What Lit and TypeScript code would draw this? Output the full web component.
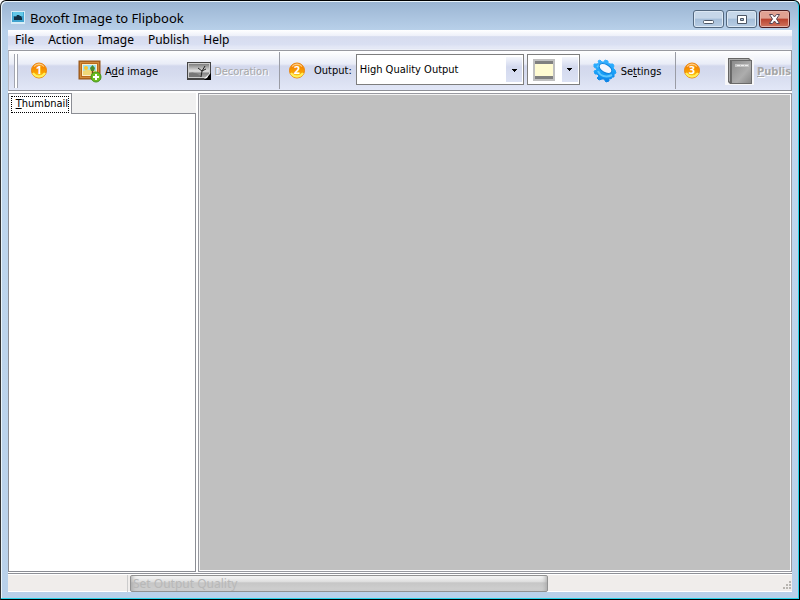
import { LitElement, html, css, svg } from "lit";
import { customElement, property } from "lit/decorators.js";

@customElement("step-badge")
class StepBadge extends LitElement {
  @property({ type: Number }) step = 1;

  static styles = css`
    :host { display: block; flex: none; width: 18px; height: 18px; }
    svg { display: block; }
    text { font: bold 11px "Open Sans", sans-serif; fill: #fff; text-anchor: middle; }
  `;

  render() {
    return html`<svg width="18" height="18" viewBox="0 0 18 18" aria-label="Step ${this.step}">
      <defs>
        <linearGradient id="g" x1="0" y1="0" x2="0" y2="1">
          <stop offset="0" stop-color="#ffb84a" /><stop offset=".3" stop-color="#f58a00" />
          <stop offset=".65" stop-color="#fba400" /><stop offset="1" stop-color="#fff04a" />
        </linearGradient>
      </defs>
      <circle cx="9" cy="8.500" r="7.500" fill="url(#g)" stroke="#ea8410" />
      <path d="M4 4.500A6.500 6.500 0 0 1 14 4.500" fill="none" stroke="#ffd090" />
      <path d="M3 11A7 7 0 0 0 15 11" fill="none" stroke="#fff25a" stroke-width="2" />
      <text x="9" y="12">${this.step}</text>
    </svg>`;
  }
}

const pictureIcon = svg`<svg width="24" height="24" viewBox="0 0 24 24" aria-hidden="true">
  <rect x="1" y="2" width="21" height="18" fill="#b96a1c" stroke="#94561c"/>
  <rect x="2.500" y="3.500" width="18" height="15" fill="none" stroke="#d08a3c"/>
  <rect x="4.500" y="5.500" width="14" height="11" fill="#9be0f6" stroke="#fbeec8"/>
  <path d="M5 12Q10 9.500 18 12V16H5Z" fill="#f0d878"/>
  <circle cx="8" cy="9" r="2" fill="#ffc62b"/>
  <path d="M14.500 10V15" stroke="#704818" stroke-width="1.500"/>
  <path d="M14.500 6L17 9L16 12H13L12 9Z" fill="#4c8a28"/>
  <circle cx="18" cy="18" r="5" fill="#6cbc20" stroke="#44941a"/>
  <path d="M18 15V21M15 18H21" stroke="#fff" stroke-width="2"/>
</svg>`;

const decorationIcon = svg`<svg width="25" height="20" viewBox="0 0 25 20" aria-hidden="true">
  <defs><linearGradient id="d" x1="0" y1="0" x2="0" y2="1">
    <stop offset="0" stop-color="#777"/><stop offset=".55" stop-color="#e2e2e2"/>
    <stop offset=".7" stop-color="#888"/><stop offset="1" stop-color="#aaa"/></linearGradient></defs>
  <rect x="0" y="1" width="24" height="18" fill="#444"/>
  <rect x="1.500" y="2.500" width="21" height="14" fill="url(#d)" stroke="#ccc"/>
  <path d="M2 12Q8 10 14 15L14 16H2Z" fill="#777"/>
  <path d="M14 16L15 10L11 7M15 10L18 5M15 10L19 8" fill="none" stroke="#222"/>
  <path d="M24 12V19H17Z" fill="#000"/><path d="M17 18L23 12L20 17Z" fill="#fff"/>
</svg>`;

const gearIcon = svg`<svg width="24" height="24" viewBox="0 0 24 24" aria-hidden="true">
  <defs><linearGradient id="b" x1="0" y1="0" x2="0" y2="1">
    <stop offset="0" stop-color="#38b0ff"/><stop offset=".5" stop-color="#1ca4fa"/>
    <stop offset="1" stop-color="#0a80e4"/></linearGradient></defs>
  <path fill="url(#b)" stroke="url(#b)" stroke-linejoin="round" d="M5 2L7 1L9 3L11 3L12 1L15 2L15 4L17 5L20 5L21 7L20 9L22 11L23 14L21 15L21 18L19 18L18 20L16 19L16 22L13 23L11 20L9 20L6 21L4 19L6 17L4 15L2 15L1 12L4 11L3 9L1 8L1 5L4 5L6 4Z"/>
  <path d="M4 8L7 6L11 5M5 12C7 17 13 19 19 16" fill="none" stroke="#5cc6ff" stroke-width="2"/>
  <ellipse cx="12.500" cy="9.500" rx="7" ry="4" transform="rotate(30 12.500 9.500)" fill="#f4f6fd" stroke="#0e82dc"/>
</svg>`;

const bookIcon = svg`<svg width="29" height="28" viewBox="0 0 29 28" aria-hidden="true">
  <defs><linearGradient id="k" x1="0" y1="0" x2="1" y2="1">
    <stop offset="0" stop-color="#8a8a8a"/><stop offset=".6" stop-color="#adadad"/>
    <stop offset="1" stop-color="#858585"/></linearGradient></defs>
  <rect width="29" height="28" fill="#f7f7f9"/>
  <path d="M3 1H24L27 4V27H5L3 25Z" fill="#666"/>
  <path d="M4 2H23L25 3H5V25L4 24Z" fill="#aaa"/>
  <rect x="6.500" y="3.500" width="20" height="23" fill="url(#k)" stroke="#6a6a6a"/>
  <rect x="10" y="7" width="14" height="3" fill="#c4c4c4"/>
  <path d="M12 8.500H23" stroke="#ececec" stroke-dasharray="3 1"/>
</svg>`;

@customElement("app-root")
class AppRoot extends LitElement {
  static styles = css`
    * { box-sizing: border-box; }
    :host {
      display: flex; flex-direction: column; height: 100vh; box-sizing: border-box;
      overflow: hidden; padding: 0 7px 7px 6px; color: #000;
      font: 11px/16px "DejaVu Sans Condensed", "DejaVu Sans", sans-serif;
      border: 1px solid #000; border-left-color: #333; border-radius: 6px 6px 0 0;
      box-shadow: inset 0 -1px #28d2e8, inset -1px 0 #28d2e8, inset 1px 1px #e9f4fb;
      background: linear-gradient(#9ab4d2, #b9d1ea 30px, #bfd7ee 90px, #b9d1ea);
    }
    button { font: inherit; color: inherit; background: none; border: 0; padding: 0; margin: 0; }
    svg { display: block; flex: none; }
    .title { display: flex; flex: none; height: 29px; align-items: center; padding: 5px 0 0 4px; }
    h1 { margin: 0; padding-left: 5px; flex: 1; font: 13px/20px "Noto Sans", sans-serif; }
    .caption { display: flex; gap: 2px; height: 18px; align-self: flex-start; margin: 4px 2px 0 0; }
    .caption button {
      width: 31px; display: grid; place-items: center; border: 1px solid #53687f; border-radius: 3px;
      background: linear-gradient(#c6d7e9 45%, #a5bed9 50%, #b8cde4); box-shadow: inset 0 0 0 1px #dce8f4;
    }
    .caption .close { border-color: #4b1c20; background: linear-gradient(#e0a192 45%, #b9422e 50%, #d0755f); box-shadow: inset 0 0 0 1px #e6b3a8; }
    .client { flex: 1; min-height: 0; display: flex; flex-direction: column; background: #fff; margin-left: 1px; }
    .menu { flex: none; height: 20px; display: flex; gap: 14px; padding-left: 7px; background: linear-gradient(#fff, #eef0f9 30%, #d7dcef 35%, #d9dff2 75%, #e4e8f6 90%); font: 12px/20px "Noto Sans", sans-serif; border-bottom: 1px solid #edf0f8; }
    .toolbar {
      flex: none; height: 41px; display: flex; align-items: center; overflow: hidden; white-space: nowrap;
      border: 1px solid #9899a0; border-left-color: #b5b7c0; border-bottom-color: #8e9097;
      background: linear-gradient(#fff, #e9ecf7 13px, #d3d8ed 15px, #d5dbee 23px, #e2e7f7); padding: 0 0 0 5px;
    }
    .grip { width: 4px; height: 34px; flex: none; border: solid #a2a5b0; border-width: 0 1px; background: #fff; }
    .group { display: flex; flex: none; align-items: center; height: 37px; }
    .one { width: 262px; padding-left: 12px; border-right: 1px solid #9a9ca5; }
    .two { width: 396px; padding-left: 8px; border-right: 1px solid #9a9ca5; }
    .three { padding-left: 7px; }
    .tool { display: flex; align-items: center; gap: 3px; }
    .tool span { padding-top: 3px; }
    .add { margin-left: 30px; }
    .decoration { margin-left: 29px; gap: 2px; }
    .tool:disabled { color: #a6a6a6; text-shadow: 1px 1px #fff; }
    .output { margin: 0 4px 0 8px; }
    select, .color { flex: none; height: 31px; border: 1px solid #7e7e7e; border-radius: 0; margin-bottom: 2px; }
    select {
      appearance: none; width: 168px; padding: 1px 20px 0 3px; font: inherit; color: #000; margin: 0 3px 2px 0;
      background:
        linear-gradient(#000, #000) right 6px top 14px / 5px 1px no-repeat,
        linear-gradient(#000, #000) right 7px top 15px / 3px 1px no-repeat,
        linear-gradient(#000, #000) right 8px top 16px / 1px 1px no-repeat,
        linear-gradient(#f4f6fc, #d3d9ee 40%, #dce2f4) right 1px center / 16px 25px no-repeat, #fff;
    }
    .color { width: 53px; display: flex; align-items: center; justify-content: space-between; padding: 0 1px 0 5px; background: #fff; }
    .swatch { width: 22px; height: 22px; border: 2px solid #c0c0c0; background: linear-gradient(#808080 3px, #fffbd2 3px 15px, #808080 15px); }
    .drop { width: 16px; height: 25px; display: grid; place-items: center; background: linear-gradient(#f4f6fc, #d3d9ee 40%, #dce2f4); }
    .settings { margin-left: 13px; gap: 4px; }
    .publish { margin-left: 24px; font-weight: bold; }
    .work { flex: 1; min-height: 0; display: flex; gap: 2px; border-top: 2px solid #fff; }
    .side { width: 188px; flex: none; display: flex; flex-direction: column; background: #f0f0f0; }
    .tab { width: 64px; height: 21px; padding: 2px; background: #fff; border: 1px solid #8b8d94; border-bottom: 0; position: relative; z-index: 1; }
    .tab span { display: block; width: 58px; height: 17px; line-height: 14px; text-align: right; border: 1px dotted #000; white-space: nowrap; }
    .panel { flex: 1; background: #fff; border: 1px solid #8b8d94; margin-top: -1px; }
    .canvas { flex: 1; background: #c0c0c0; border: 1px solid #9899a0; box-shadow: inset 1px 1px #f4f4f4, inset -1px -1px #fff; }
    .status { flex: none; height: 19px; margin-top: 1px; border-top: 1px solid #8e9097; display: flex; background: #f0edeb; padding-top: 1px; box-shadow: inset 0 1px #fff, inset 0 -1px #fff; }
    .cell { width: 120px; flex: none; border-right: 1px solid #ccc; }
    .message { width: 418px; height: 17px; margin-left: 2px; padding-left: 2px; overflow: hidden; border: 1px solid #929292; border-radius: 2px; background: linear-gradient(#fafafa, #dcdcdc 40%, #c6c6c6 45%, #d0d0d0); color: #b8b8b8; font: 12px/16px "Noto Sans", sans-serif; box-shadow: inset 5px 0 5px -4px #a4a4a4, inset -5px 0 5px -4px #a4a4a4; }
    .sizer { margin: auto 0 2px auto; }
  `;

  render() {
    return html`
      <header class="title">
        <svg width="14" height="14" viewBox="0 0 14 14" aria-hidden="true">
          <rect width="14" height="13" fill="#d7edf7"/><rect x="1" y="1" width="12" height="10" fill="#3fa3cf"/>
          <rect x="2" y="1" width="10" height="4" fill="#62c8e8"/>
          <path d="M3 9V6L4 5L5 6L6 4L8 4L9 5L10 5L11 7V9Z" fill="#123247"/>
        </svg>
        <h1>Boxoft Image to Flipbook</h1>
        <div class="caption">
          <button aria-label="Minimize"><svg width="13" height="12"><rect x="1.500" y="7.500" width="10" height="3" rx="1" fill="#fff" stroke="#4c5665"/></svg></button>
          <button aria-label="Maximize"><svg width="12" height="12"><path d="M1.500 2.500H10.500V10.500H1.500ZM4.500 5.500V7.500H7.500V5.500Z" fill="#fff" fill-rule="evenodd" stroke="#4c5665"/></svg></button>
          <button class="close" aria-label="Close"><svg width="13" height="12"><path d="M1.500 1.500H4.500L6.500 4L8.500 1.500H11.500L8.500 6L11.500 10.500H8.500L6.500 8L4.500 10.500H1.500L4.500 6Z" fill="#fff" stroke="#584654"/></svg></button>
        </div>
      </header>
      <main class="client">
        <nav class="menu">
          ${["File", "Action", "Image", "Publish", "Help"].map((name) => html`<button>${name}</button>`)}
        </nav>
        <div class="toolbar" role="toolbar">
          <div class="grip"></div>
          <div class="group one">
            <step-badge step="1"></step-badge>
            <button class="tool add">${pictureIcon}<span>A<u>d</u>d image</span></button>
            <button class="tool decoration" disabled>${decorationIcon}<span>Decoration</span></button>
          </div>
          <div class="group two">
            <step-badge step="2"></step-badge>
            <label class="output" for="output">Output:</label>
            <select id="output"><option>High Quality Output</option></select>
            <button class="color" aria-label="Background color">
              <span class="swatch"></span>
              <span class="drop"><svg width="5" height="3"><path d="M0 0H5V1H4V2H3V3H2V2H1V1H0Z"/></svg></span>
            </button>
            <button class="tool settings">${gearIcon}<span>Se<u>t</u>tings</span></button>
          </div>
          <div class="group three">
            <step-badge step="3"></step-badge>
            <button class="tool publish" disabled>${bookIcon}<span><u>P</u>ublish</span></button>
          </div>
        </div>
        <div class="work">
          <section class="side">
            <button class="tab" role="tab" aria-selected="true"><span><u>T</u>humbnail</span></button>
            <div class="panel" role="tabpanel"></div>
          </section>
          <section class="canvas"></section>
        </div>
        <footer class="status">
          <div class="cell"></div>
          <div class="message">Set Output Quality</div>
          <svg class="sizer" width="9" height="9" fill="#b8b5b0" aria-hidden="true">
            <path d="M6 0h2v2h-2zM6 3h2v2h-2zM6 6h2v2h-2zM3 3h2v2h-2zM3 6h2v2h-2zM0 6h2v2h-2z"/>
          </svg>
        </footer>
      </main>
    `;
  }
}
